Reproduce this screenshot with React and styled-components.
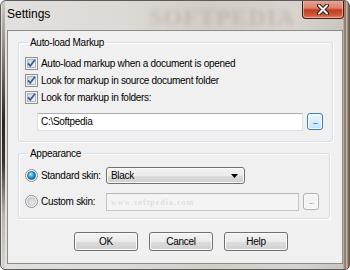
import React from 'react';
import styled, { createGlobalStyle } from 'styled-components';

const Global = createGlobalStyle`
  html, body { margin: 0; padding: 0; background: #fff; }
  * { box-sizing: border-box; }
`;

const Window = styled.div`
  position: relative;
  width: 350px;
  height: 270px;
  border: 1px solid #5c5c5c;
  border-radius: 6px 6px 5px 5px;
  padding: 0 6px 5px 6px;
  display: flex;
  flex-direction: column;
  overflow: hidden;
  font-family: "Liberation Sans", Arial, sans-serif;
  font-size: 10px;
  letter-spacing: -0.3px;
  color: #000;
  background:
    linear-gradient(to bottom, #cfc9c3 0%, #2a2522 45%, #3a3330 60%, #b9b4b0 80%, #d6d3d0 100%) left 1px top 0 / 3px 100% no-repeat,
    linear-gradient(to right, #c9bfb6 0%, #8a6c55 35%, #c8b8a8 60%, #6a5443 100%) right 0 top 0 / 6px 100% no-repeat,
    linear-gradient(to right, #e2e1df 0%, #ddd9d4 35%, #d4cdc5 60%, #d8d3cd 85%, #c9c3bd 100%);
`;

const TitleBar = styled.div`
  height: 29px;
  display: flex;
  align-items: flex-start;
`;

const Title = styled.span`
  padding-top: 6px;
  font-size: 12px;
  letter-spacing: 0;
  color: #000;
`;

const Watermark = styled.span`
  position: absolute;
  left: ${p => p.$x}px;
  top: ${p => p.$y}px;
  font-family: "Liberation Serif", serif;
  font-size: ${p => p.$size}px;
  font-weight: bold;
  letter-spacing: 1px;
  color: ${p => p.$color};
  filter: blur(${p => p.$blur}px);
  pointer-events: none;
`;

const CloseButton = styled.div`
  margin-left: auto;
  margin-right: -1px;
  margin-top: -1px;
  width: 42px;
  height: 19px;
  border: 1px solid #4d1a12;
  border-top: none;
  border-radius: 0 0 4px 4px;
  background: linear-gradient(to bottom, #e8a798 0%, #d9826f 45%, #c23b20 55%, #cf5a3a 85%, #e0856a 100%);
  box-shadow: inset 0 0 0 1px rgba(255, 200, 180, 0.6);
  display: flex;
  align-items: center;
  justify-content: center;
`;

const Client = styled.div`
  flex: 1;
  border: 1px solid #8b8b8b;
  background: #f0f0f0;
  display: flex;
  flex-direction: column;
  padding: 0 0 0 10px;
`;

const Group = styled.fieldset`
  margin: 0;
  margin-top: ${p => p.$top}px;
  width: ${p => p.$width}px;
  height: ${p => p.$height}px;
  border: 1px solid #d5dfe5;
  border-radius: 3px;
  box-shadow: inset 1px 1px 0 #fff, 1px 1px 0 #fff;
  padding: 0 0 0 6px;
  min-inline-size: 0;
`;

const Legend = styled.legend`
  padding: 0 2px;
  margin-left: 3px;
  line-height: 13px;
`;

const Rows = styled.div`
  display: flex;
  flex-direction: column;
  padding-top: ${p => p.$top}px;
`;

const Row = styled.div`
  height: ${p => p.$h || 17}px;
  margin-top: ${p => p.$mt || 0}px;
  display: flex;
  align-items: center;
  gap: 3px;
`;

const Label = styled.span`
  line-height: 13px;
  width: ${p => (p.$w ? `${p.$w}px` : 'auto')};
  white-space: nowrap;
  flex: none;
`;

const TextField = styled.div`
  width: ${p => p.$w}px;
  height: 18px;
  margin-left: ${p => p.$indent || 0}px;
  border: 1px solid ${p => (p.$disabled ? '#c2c5ca' : '#dbdfe6')};
  border-top-color: ${p => (p.$disabled ? '#b4b8bd' : '#abadb3')};
  background: ${p => (p.$disabled ? '#f4f4f4' : '#fff')};
  display: flex;
  align-items: center;
  padding-left: 3px;
`;

const Browse = styled.div`
  width: 16px;
  height: 17px;
  margin-left: 1px;
  border: 1px solid ${p => (p.$disabled ? '#adb2b5' : '#3c7fb1')};
  border-radius: 3px;
  background: ${p => (p.$disabled ? '#f4f4f4' : 'linear-gradient(#eaf6fd, #bee6fd)')};
  box-shadow: inset 0 0 0 1px ${p => (p.$disabled ? '#fcfcfc' : '#fff')};
  color: ${p => (p.$disabled ? '#9a9a9a' : '#1e395b')};
  font-size: 9px;
  line-height: 12px;
  display: flex;
  align-items: flex-end;
  justify-content: center;
  padding-bottom: 2px;
  letter-spacing: -1px;
`;

const Select = styled.div`
  width: 139px;
  height: 17px;
  border: 1px solid #707070;
  border-radius: 3px;
  background: linear-gradient(to bottom, #f2f2f2 0%, #ebebeb 50%, #dddddd 51%, #cfcfcf 100%);
  box-shadow: inset 0 0 0 1px #fcfcfc;
  display: flex;
  align-items: center;
  justify-content: space-between;
  padding: 0 6px 0 4px;
`;

const ButtonRow = styled.div`
  display: flex;
  gap: 11px;
  margin-top: 13px;
  padding-left: 56px;
`;

const Button = styled.div`
  width: 64px;
  height: 19px;
  border: 1px solid #707070;
  border-radius: 3px;
  background: linear-gradient(to bottom, #f2f2f2 0%, #ebebeb 50%, #dddddd 51%, #cfcfcf 100%);
  box-shadow: inset 0 0 0 1px #fcfcfc;
  display: flex;
  align-items: center;
  justify-content: center;
`;

function Checkbox() {
  return (
    <svg width="13" height="13" viewBox="0 0 13 13">
      <defs>
        <linearGradient id="cbg" x1="0" y1="0" x2="1" y2="1">
          <stop offset="0" stopColor="#cbcfd5" />
          <stop offset="1" stopColor="#f6f6f6" />
        </linearGradient>
      </defs>
      <rect x="0.5" y="0.5" width="12" height="12" fill="#f4f4f4" stroke="#8e8f8f" />
      <rect x="2.5" y="2.5" width="8" height="8" fill="url(#cbg)" stroke="#b2b7bd" />
      <path d="M3 6.3 L5.3 8.8 L10 2.8" fill="none" stroke="#3e5dab" strokeWidth="1.8" />
    </svg>
  );
}

function Radio({ checked }) {
  return (
    <svg width="13" height="13" viewBox="0 0 13 13">
      <defs>
        <radialGradient id="rsel" cx="0.4" cy="0.35" r="0.7">
          <stop offset="0" stopColor="#b8ecff" />
          <stop offset="0.5" stopColor="#29a3e0" />
          <stop offset="1" stopColor="#125d96" />
        </radialGradient>
        <linearGradient id="roff" x1="0" y1="0" x2="1" y2="1">
          <stop offset="0" stopColor="#c6c9cc" />
          <stop offset="1" stopColor="#f2f2f2" />
        </linearGradient>
      </defs>
      <circle cx="6.5" cy="6.5" r="6" fill="#f4f4f4" stroke="#8e8f8f" />
      <circle cx="6.5" cy="6.5" r="4" fill={checked ? 'url(#rsel)' : 'url(#roff)'} stroke={checked ? '#2a5f8c' : '#b8bcc0'} strokeWidth="0.8" />
    </svg>
  );
}

function CloseGlyph() {
  return (
    <svg width="12" height="11" viewBox="0 0 12 11">
      <path d="M2 1.5 L10 9.5 M10 1.5 L2 9.5" stroke="#3a1810" strokeWidth="4" strokeLinecap="round" />
      <path d="M2 1.5 L10 9.5 M10 1.5 L2 9.5" stroke="#fff" strokeWidth="2" strokeLinecap="round" />
    </svg>
  );
}

export default function App() {
  return (
    <>
      <Global />
      <Window>
        <Watermark $x={148} $y={3} $size={24} $color="rgba(120,110,100,0.22)" $blur={2.2}>SOFTPEDIA</Watermark>
        <Watermark $x={110} $y={197} $size={8} $color="rgba(170,170,170,0.3)" $blur={0.3}>www.softpedia.com</Watermark>
        <TitleBar>
          <Title>Settings</Title>
          <CloseButton><CloseGlyph /></CloseButton>
        </TitleBar>
        <Client>
          <Group $top={5} $width={315} $height={106}>
            <Legend>Auto-load Markup</Legend>
            <Rows $top={6}>
              <Row><Checkbox /><Label>Auto-load markup when a document is opened</Label></Row>
              <Row><Checkbox /><Label>Look for markup in source document folder</Label></Row>
              <Row><Checkbox /><Label>Look for markup in folders:</Label></Row>
              <Row $h={19} $mt={6}>
                <TextField $w={266} $indent={12}>C:\Softpedia</TextField>
                <Browse>...</Browse>
              </Row>
            </Rows>
          </Group>
          <Group $top={5} $width={312} $height={72}>
            <Legend>Appearance</Legend>
            <Rows $top={6}>
              <Row $h={19}><Radio checked /><Label $w={62}>Standard skin:</Label>
                <Select>Black
                  <svg width="7" height="4" viewBox="0 0 7 4"><path d="M0 0 H7 L3.5 4 Z" fill="#000" /></svg>
                </Select>
              </Row>
              <Row $h={19} $mt={7}><Radio /><Label $w={62}>Custom skin:</Label>
                <TextField $w={193} $disabled />
                <Browse $disabled>...</Browse>
              </Row>
            </Rows>
          </Group>
          <ButtonRow>
            <Button>OK</Button>
            <Button>Cancel</Button>
            <Button>Help</Button>
          </ButtonRow>
        </Client>
      </Window>
    </>
  );
}
